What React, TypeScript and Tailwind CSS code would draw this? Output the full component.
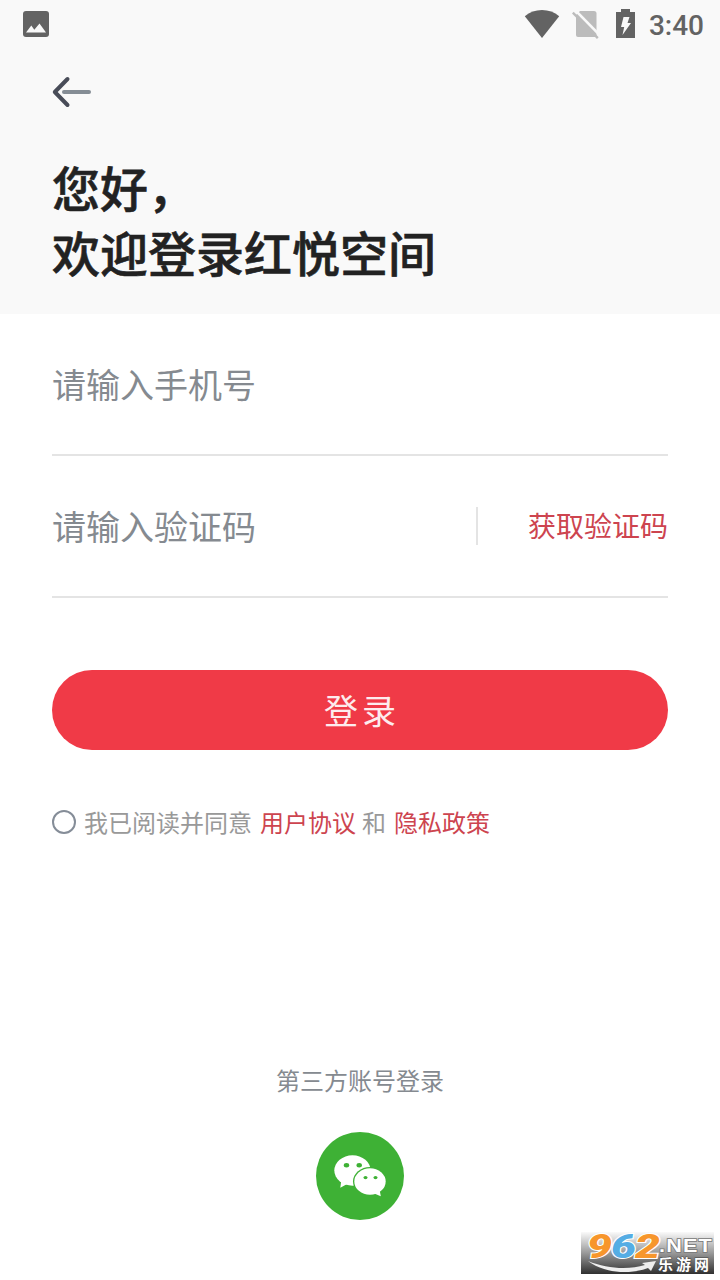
import { useState } from "react";

function StatusBar() {
  return (
    <div className="flex h-12 items-center justify-between pl-[23px] pr-4 text-[#636363]">
      <svg width="26" height="26" viewBox="0 0 26 26">
        <rect width="26" height="26" rx="3" fill="currentColor" />
        <path d="M3 21.500 8.300 14.500l3 4.200L16.500 12.500 23 21.500z" fill="#f9f9f9" />
      </svg>
      <div className="flex items-center">
        <svg width="36" height="30" viewBox="0 0 36 30" className="mr-3">
          <path
            d="M18 29 .8 7.200C5.500 3.200 11.500 1 18 1s12.500 2.200 17.200 6.200z"
            fill="currentColor"
          />
        </svg>
        <svg width="27" height="30" viewBox="0 0 27 30" className="mr-[17px]">
          <path
            d="M8 2h14a2.500 2.500 0 0 1 2.500 2.500V28H6a2 2 0 0 1-2-2V6z"
            fill="#bcbcbc"
          />
          <path d="M3.200 1.200 28.200 26.600" stroke="#f9f9f9" strokeWidth="2.600" />
          <path d="M.8 3.700 25.800 29.100" stroke="#bcbcbc" strokeWidth="2.400" />
        </svg>
        <svg width="19" height="30" viewBox="0 0 19 30" className="mr-[14px]">
          <path d="M5 0h9v3h5v26H0V3h5z" fill="currentColor" />
          <path d="M7.500 8h6l-2 6H15L6.500 26l1.700-8H5z" fill="#f9f9f9" />
        </svg>
        <span className="mt-1 font-['Roboto',sans-serif] text-[28px] font-medium leading-none">
          3:40
        </span>
      </div>
    </div>
  );
}

function WechatIcon() {
  return (
    <svg width="88" height="88" viewBox="0 0 88 88">
      <circle cx="44" cy="44" r="44" fill="#3eb135" />
      <ellipse cx="36.500" cy="38.500" rx="18.200" ry="15.200" fill="#fff" />
      <path d="M25.500 47 24.300 55.700 33 51z" fill="#fff" />
      <ellipse cx="30.500" cy="33.200" rx="2.700" ry="2.200" fill="#3eb135" />
      <ellipse cx="43.200" cy="33.200" rx="2.700" ry="2.200" fill="#3eb135" />
      <ellipse cx="54" cy="49.500" rx="17" ry="14.600" fill="#3eb135" />
      <ellipse cx="54" cy="49.500" rx="15.700" ry="13.200" fill="#fff" />
      <path d="M57 61 64.800 64.200 63.500 57.500z" fill="#fff" />
      <ellipse cx="49.500" cy="45.600" rx="2" ry="1.700" fill="#3eb135" />
      <ellipse cx="59.500" cy="45.600" rx="2" ry="1.700" fill="#3eb135" />
    </svg>
  );
}

function SiteBadge() {
  return (
    <svg
      width="133"
      height="42"
      viewBox="0 0 133 42"
      className="absolute left-[581px] top-[1232px] overflow-visible"
    >
      <defs>
        <linearGradient id="badgeBg" x1="0" y1="0" x2="0" y2="1">
          <stop offset="0" stopColor="#fafafa" />
          <stop offset="0.500" stopColor="#999" />
          <stop offset="1" stopColor="#303030" />
        </linearGradient>
      </defs>
      <rect width="133" height="42" fill="url(#badgeBg)" />
      <path
        d="M7 29C26 37 48 38 64 33l-3-2 14-2-5 10-3-3C48 43 23 41 7 29z"
        fill="#eee"
      />
      <g
        fontFamily="Roboto, sans-serif"
        fontWeight="900"
        fontStyle="italic"
        fontSize="33"
        stroke="#fff"
        strokeWidth="2"
        paintOrder="stroke"
      >
        <text x="6" y="26" fill="#f7962c" textLength="25" lengthAdjust="spacingAndGlyphs">
          9
        </text>
        <text x="30" y="26" fill="#55ade4" textLength="25" lengthAdjust="spacingAndGlyphs">
          6
        </text>
        <text x="54" y="26" fill="#f7962c" textLength="25" lengthAdjust="spacingAndGlyphs">
          2
        </text>
      </g>
      <text
        x="78"
        y="19.500"
        fontFamily="'Liberation Sans', sans-serif"
        fontWeight="bold"
        fontSize="18"
        letterSpacing="1"
        fill="#fff"
        stroke="#777"
        strokeWidth="1.500"
        paintOrder="stroke"
        textLength="54"
        lengthAdjust="spacingAndGlyphs"
      >
        .NET
      </text>
      <text
        x="77"
        y="37.500"
        fontFamily="'Noto Sans CJK SC', sans-serif"
        fontWeight="bold"
        fontSize="15"
        fill="#fff"
        stroke="#444"
        strokeWidth="1"
        paintOrder="stroke"
        textLength="51"
      >
        乐游网
      </text>
    </svg>
  );
}

export default function App() {
  const [phone, setPhone] = useState("");
  const [code, setCode] = useState("");
  const [agreed, setAgreed] = useState(false);

  return (
    <div
      lang="zh-CN"
      className="relative flex h-[1280px] w-[720px] flex-col overflow-hidden bg-white font-['Noto_Sans_CJK_SC',sans-serif]"
    >
      <header className="h-[314px] bg-[#f9f9f9]">
        <StatusBar />
        <button className="ml-[52px] mt-7 block" aria-label="返回">
          <svg width="40" height="32" viewBox="0 0 40 32" fill="none" strokeLinecap="round">
            <path d="M12 16h25" stroke="#858d95" strokeWidth="4" />
            <path
              d="M15.500 3 2.800 16l12.700 13"
              stroke="#484c58"
              strokeWidth="4"
              strokeLinejoin="round"
            />
          </svg>
        </button>
        <h1 className="ml-[52px] mt-[46px] text-[48px] font-medium leading-[65px] text-[#222] [-webkit-text-stroke:0.6px_#222]">
          您好，
          <br />
          欢迎登录红悦空间
        </h1>
      </header>

      <main className="flex flex-col px-[52px]">
        <div className="flex h-[142px] items-center border-b-2 border-[#e4e4e4]">
          <input
            className="w-full text-[34px] leading-[50px] outline-none placeholder:text-[#858a90]"
            placeholder="请输入手机号"
            value={phone}
            onChange={(e) => setPhone(e.target.value)}
          />
        </div>
        <div className="flex h-[142px] items-center border-b-2 border-[#e4e4e4]">
          <input
            className="w-[424px] text-[34px] leading-[50px] outline-none placeholder:text-[#858a90]"
            placeholder="请输入验证码"
            value={code}
            onChange={(e) => setCode(e.target.value)}
          />
          <div className="h-[38px] w-[2px] bg-[#e4e4e4]" />
          <button className="ml-auto whitespace-nowrap pb-0.5 text-[28px] leading-10 text-[#cd444f]">
            获取验证码
          </button>
        </div>

        <button className="mt-[72px] h-20 rounded-full bg-[#f03a47] pb-0.5 pl-1 text-[34px] tracking-[4px] text-[#fdecee]">
          登录
        </button>

        <div className="mt-[54px] flex h-9 items-center text-[24px] leading-9 text-[#999]">
          <button
            className="mr-2 size-6 shrink-0 rounded-full border-2 border-[#858d98]"
            aria-label="同意"
            aria-pressed={agreed}
            onClick={() => setAgreed(!agreed)}
          />
          <span>我已阅读并同意</span>
          <span className="ml-2 text-[#cd444f]">用户协议</span>
          <span className="ml-1.5">和</span>
          <span className="ml-2 text-[#cd444f]">隐私政策</span>
        </div>
      </main>

      <footer className="mt-[222px] flex flex-col items-center">
        <p className="text-[24px] leading-9 text-[#858a90]">第三方账号登录</p>
        <button className="mt-[34px]" aria-label="微信">
          <WechatIcon />
        </button>
      </footer>

      <SiteBadge />
    </div>
  );
}
